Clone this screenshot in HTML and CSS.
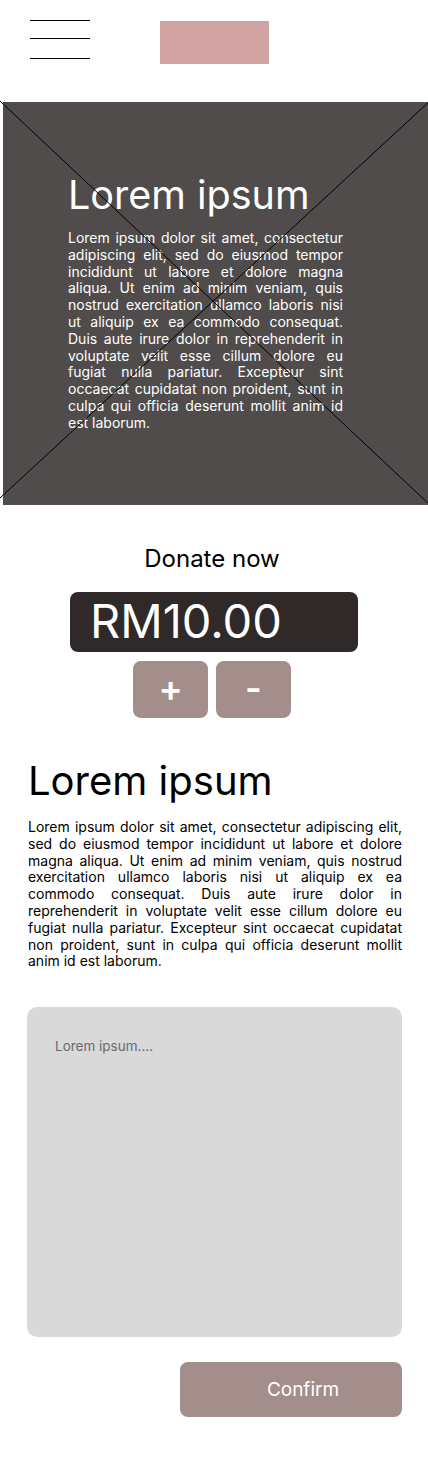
FILE: index.html
```html
<!DOCTYPE html>
<html lang="en">
<head>
<meta charset="utf-8">
<title>Donate</title>
<link rel="stylesheet" href="styles.css">
</head>
<body>
<header class="topbar">
  <div class="burger"><span class="bar bar-1"></span><span class="bar bar-2"></span><span class="bar bar-3"></span></div>
  <div class="logo"></div>
</header>

<section class="hero">
  <svg class="hero-cross" viewBox="0 0 431 406" preserveAspectRatio="none" aria-hidden="true">
    <line x1="0" y1="1" x2="431" y2="406" stroke="#000" stroke-width="1"/>
    <line x1="431" y1="0" x2="0" y2="398" stroke="#000" stroke-width="1"/>
  </svg>
  <h1 class="hero-title">Lorem ipsum</h1>
  <p class="hero-text">Lorem ipsum dolor sit amet, consectetur adipiscing elit, sed do eiusmod tempor incididunt ut labore et dolore magna aliqua. Ut enim ad minim veniam, quis nostrud exercitation ullamco laboris nisi ut aliquip ex ea commodo consequat. Duis aute irure dolor in reprehenderit in voluptate velit esse cillum dolore eu fugiat nulla pariatur. Excepteur sint occaecat cupidatat non proident, sunt in culpa qui officia deserunt mollit anim id est laborum.</p>
</section>

<section class="donate">
  <h2 class="donate-title">Donate now</h2>
  <div class="amount">RM10.00</div>
  <div class="steppers">
    <button class="step">+</button>
    <button class="step">-</button>
  </div>
</section>

<section class="info">
  <h2 class="info-title">Lorem ipsum</h2>
  <p class="info-text">Lorem ipsum dolor sit amet, consectetur adipiscing elit, sed do eiusmod tempor incididunt ut labore et dolore magna aliqua. Ut enim ad minim veniam, quis nostrud exercitation ullamco laboris nisi ut aliquip ex ea commodo consequat. Duis aute irure dolor in reprehenderit in voluptate velit esse cillum dolore eu fugiat nulla pariatur. Excepteur sint occaecat cupidatat non proident, sunt in culpa qui officia deserunt mollit anim id est laborum.</p>
  <div class="message">Lorem ipsum....</div>
  <div class="actions">
    <button class="confirm">Confirm</button>
  </div>
</section>
</body>
</html>
```

FILE: styles.css
```css
* { box-sizing: border-box; }

body {
  margin: 0;
  width: 428px;
  background: #fff;
  font-family: Inter, "Noto Sans", "Liberation Sans", sans-serif;
  color: #000;
}

/* header */
.topbar {
  height: 102px;
  display: flex;
  align-items: flex-start;
  padding: 20px 0 0 30px;
  gap: 70px;
}
.burger {
  width: 60px;
  display: flex;
  flex-direction: column;
}
.bar {
  display: block;
  height: 1px;
  background: #000;
}
.bar-2 { margin-top: 17px; }
.bar-3 { margin-top: 19px; }
.logo {
  width: 109px;
  height: 43px;
  margin-top: 1px;
  background: #d2a3a3;
}

/* hero */
.hero {
  position: relative;
  margin-left: 3px;
  height: 403px;
  background: #504c4b;
  padding: 73px 85px 0 65px;
  color: #fff;
}
.hero-cross {
  position: absolute;
  left: -3px;
  top: -2px;
  width: 431px;
  height: 406px;
  overflow: visible;
  pointer-events: none;
}
.hero-title {
  margin: 0;
  font-size: 39.5px;
  line-height: 40px;
  font-weight: 400;
}
.hero-text {
  margin: 15px 0 0;
  font-size: 14px;
  line-height: 16.8px;
  text-align: justify;
}

/* donate */
.donate {
  display: flex;
  flex-direction: column;
  align-items: center;
  padding-top: 40px;
}
.donate-title {
  margin: 0 4px 0 0;
  font-size: 24px;
  line-height: 28px;
  font-weight: 400;
}
.amount {
  margin-top: 19px;
  width: 288px;
  height: 60px;
  border-radius: 8px;
  background: #2f2a29;
  color: #fff;
  font-size: 47px;
  display: flex;
  align-items: center;
  padding: 0 0 4px 20px;
  line-height: 1;
}
.steppers {
  margin-top: 9px;
  display: flex;
  gap: 8px;
  margin-right: 4px;
}
.step {
  width: 75px;
  height: 57px;
  border: 0;
  border-radius: 8px;
  background: #a38e8c;
  color: #fff;
  font-family: inherit;
  font-size: 36px;
  font-weight: 600;
  line-height: 1;
  padding: 0 0 4px;
}

/* info */
.info {
  padding: 43px 26px 60px 28px;
}
.info-title {
  margin: 0;
  font-size: 40px;
  line-height: 40px;
  font-weight: 400;
}
.info-text {
  margin: 18px 0 0;
  font-size: 14px;
  line-height: 16.8px;
  text-align: justify;
}
.message {
  margin: 37px 0 0 -1px;
  height: 330px;
  border-radius: 10px;
  background: #d9d9d9;
  padding: 31px 28px;
  font-size: 13.5px;
  line-height: 16px;
  color: #6b6b6b;
}
.actions {
  margin-top: 25px;
  display: flex;
  justify-content: flex-end;
}
.confirm {
  width: 222px;
  height: 55px;
  border: 0;
  border-radius: 8px;
  background: #a38e8c;
  color: #fff;
  font-family: inherit;
  font-size: 19px;
  padding: 0 0 0 24px;
}
```
